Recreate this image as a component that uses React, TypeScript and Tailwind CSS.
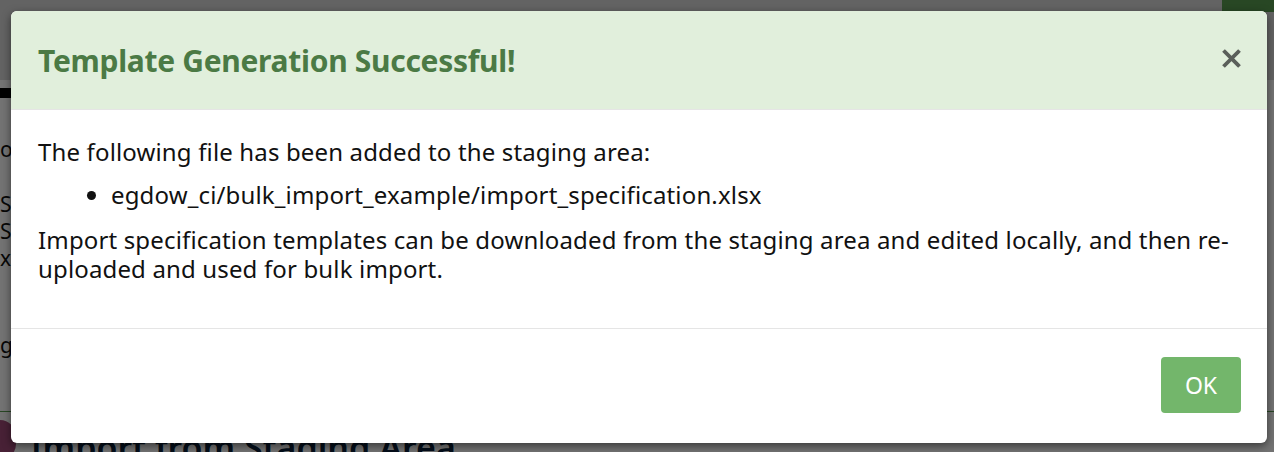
import React from 'react';

const App: React.FC = () => {
  return (
    <div className="relative h-[452px] w-[1274px] overflow-hidden bg-white font-['Noto_Sans',sans-serif]">
      {/* page behind the dialog */}
      <div className="flex h-full flex-col">
        <div className="flex h-[80px] shrink-0 items-start justify-end bg-[#dcdcdc]">
          <div className="h-[12px] w-[52px] bg-[#5a9e50]" />
        </div>
        <div className="flex flex-col text-[21px] leading-[27px] text-[#111]">
          <div className="mt-[8px] h-[10px] w-[20px] bg-black" />
          <div className="mt-[38px]">op</div>
          <div className="mt-[28px]">
            <div>Se</div>
            <div>St</div>
            <div>xe</div>
          </div>
          <div className="mt-[60px]">ge</div>
          <div className="mt-[52px] flex items-start gap-[14px] border-t border-[#5a9e50] pt-[8px]">
            <div className="h-[40px] w-[16px] rounded-r-full bg-[#a04b78]" />
            <div className="mt-[14px] text-[34px] font-semibold text-[#0b1f3a]">Import from Staging Area</div>
          </div>
        </div>
      </div>

      {/* backdrop */}
      <div className="absolute inset-0 bg-black/55" />

      {/* dialog */}
      <div className="absolute left-[11px] top-[11px] flex h-[432px] w-[1256px] flex-col overflow-hidden rounded-[6px] bg-white shadow-[0_3px_9px_rgba(0,0,0,0.5)]">
        <div className="flex h-[99px] shrink-0 items-center justify-between border-b border-[#e5e5e5] bg-[#e1efdc] pl-[27px] pr-[26px]">
          <h4 className="text-[30px] font-bold tracking-[-0.3px] text-[#4b7a45]">Template Generation Successful!</h4>
          <svg width="19" height="19" viewBox="0 0 20 20" className="mb-[4px]">
            <path d="M3 3 L17 17 M17 3 L3 17" stroke="#5a5f5a" strokeWidth="4" strokeLinecap="square" />
          </svg>
        </div>
        <div className="flex-1 border-b border-[#e5e5e5] pl-[27px] pr-[24px] pt-[27px] text-[24px] leading-[29px] tracking-[0.15px] text-[#111]">
          <p>The following file has been added to the staging area:</p>
          <ul className="mt-[14px] list-disc pl-[73px]">
            <li>egdow_ci/bulk_import_example/import_specification.xlsx</li>
          </ul>
          <p className="mt-[16px]">
            Import specification templates can be downloaded from the staging area and edited locally, and then re-uploaded and used for bulk import.
          </p>
        </div>
        <div className="flex h-[114px] shrink-0 items-center justify-end px-[26px]">
          <button className="mt-[-2px] h-[56px] w-[80px] rounded-[4px] bg-[#73b66b] text-[23px] text-white">OK</button>
        </div>
      </div>
    </div>
  );
};

export default App;
